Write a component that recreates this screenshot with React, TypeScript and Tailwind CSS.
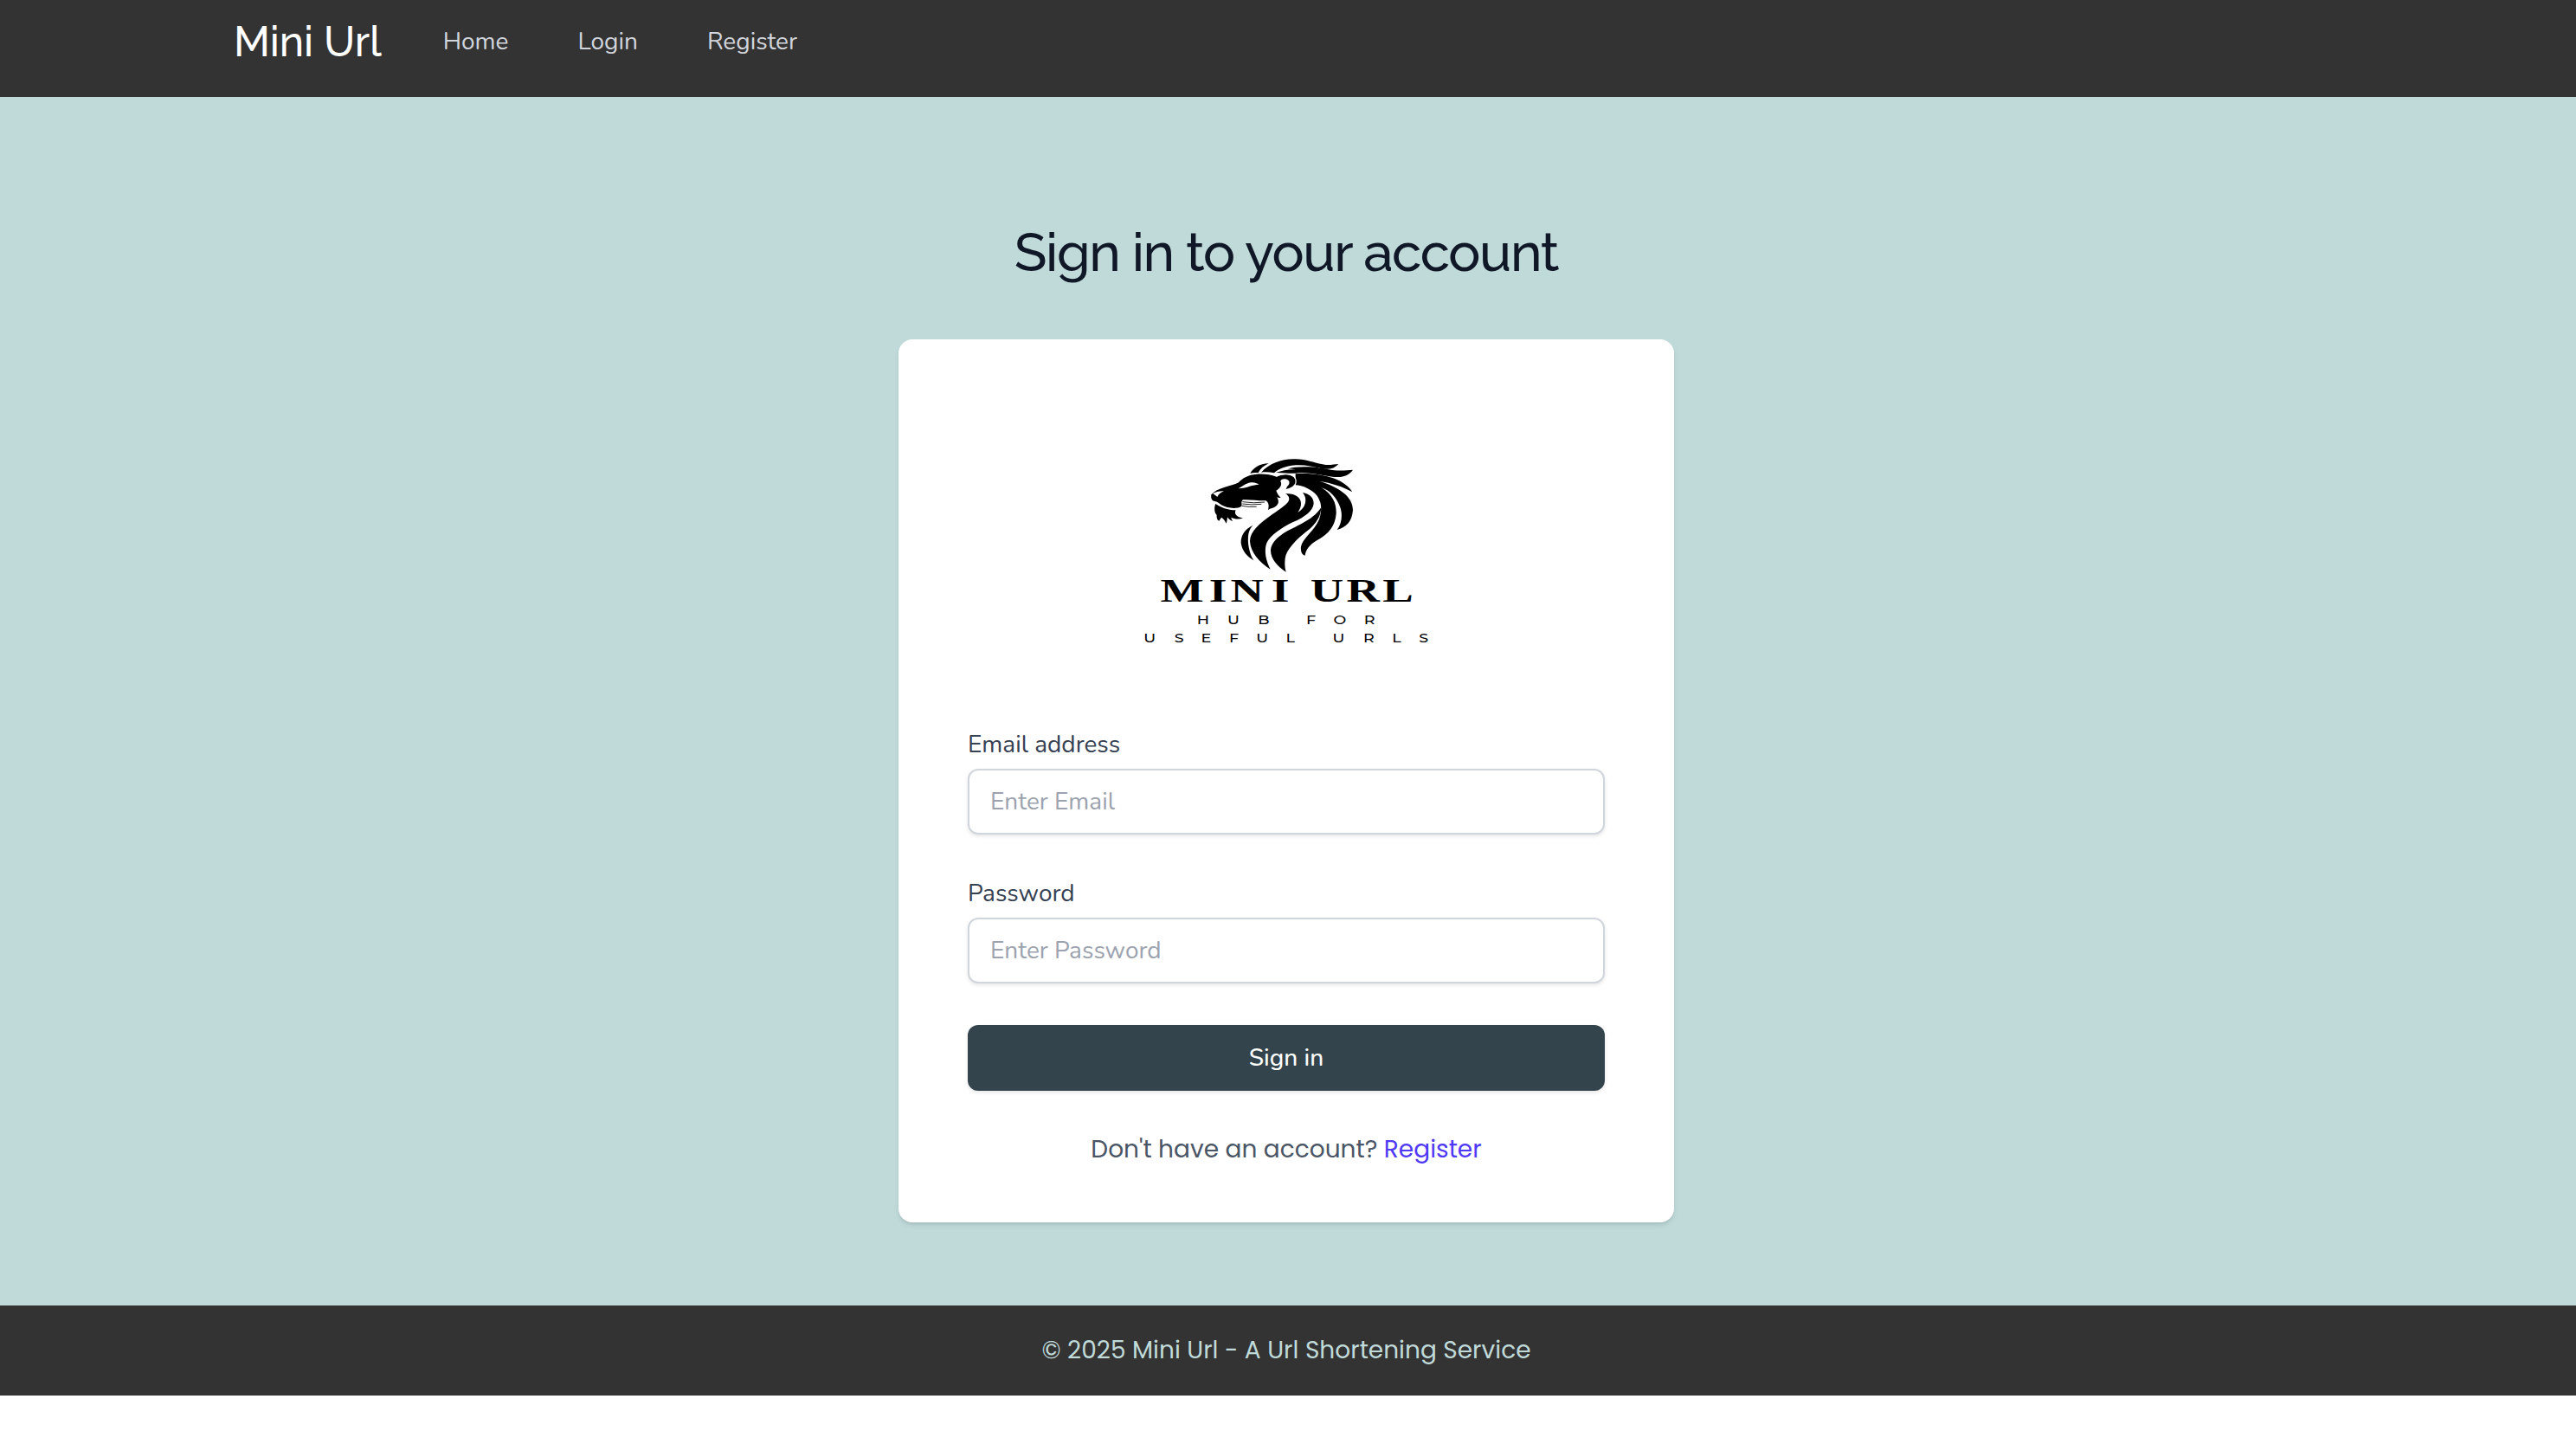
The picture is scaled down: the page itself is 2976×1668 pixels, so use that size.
const field =
  "block h-[76px] w-full rounded-xl border-2 border-gray-300 bg-white px-6 font-['Nunito','Noto_Sans',sans-serif] text-[28px] text-gray-900 shadow-[0_2px_4px_rgba(0,0,0,0.1)] outline-none placeholder:text-[#9ca3af]";
const label =
  "block h-[57px] pt-2 font-['Nunito','Noto_Sans',sans-serif] text-[28px] font-[450] text-gray-700";

function Lion() {
  return (
    <svg viewBox="0 0 600 480" className="h-[160px] w-[200px]" fill="#000">
      <path d="M193 111C203 92 226 76 257 76C240 84 228 94 221 108C212 108 202 109 193 111Z" />
      <path d="M231 107C260 75 305 59 350 61C398 63 425 78 455 81C475 82 486 78 499 78C487 92 470 97 450 95C418 89 385 79 350 82C312 86 292 95 276 109C262 106 246 105 231 107Z" />
      <path d="M282 108C305 100 325 96 350 97C340 94 330 94 322 95C355 84 415 86 460 96C500 104 528 99 549 98C536 118 512 125 485 123C445 120 400 104 350 110C328 112 305 107 282 108Z" />
      <path d="M350 112C400 108 450 116 485 128C512 138 538 158 547 175C515 157 475 144 431 137C500 158 549 190 549 238C546 277 526 298 494 306C510 285 514 255 505 228C492 193 470 170 440 160C480 185 492 215 491 250C488 295 460 325 425 342C398 358 386 375 383 395C372 393 367 380 369 364C375 335 415 310 432 270C443 235 440 210 425 188C405 165 375 152 350 151Z" />
      <path d="M439 228C438 255 425 280 400 302C350 340 318 375 314 405C312 425 313 438 317 452C285 430 263 405 264 375C267 350 285 335 305 320C350 292 410 275 439 228Z" />
      <path d="M315 181C345 178 367 192 369 212C370 226 364 236 358 246C385 230 394 200 375 177C400 181 414 197 413 215C410 240 385 260 340 280C300 300 262 325 250 352C240 380 248 415 263 443C225 418 194 385 192 345C193 310 225 285 270 252C298 232 326 215 328 200C328 190 322 185 315 181Z" />
      <path d="M203 290C175 302 160 325 161 352C165 380 183 400 205 412C190 388 182 350 187 320C190 305 196 297 203 290Z" />
      <path d="M58 184C68 172 84 164 105 158C125 152 142 148 153 142C165 127 188 115 215 113C243 111 262 115 284 122C305 112 330 112 344 124C357 140 347 160 317 165L321 156C332 148 332 134 316 130C304 129 296 134 299 140C304 150 296 162 283 170C287 181 292 188 299 195C293 196 289 194 285 192C294 205 292 217 282 224C276 230 262 231 255 237C259 222 257 211 247 205C220 206 190 200 168 202C158 210 168 218 163 224C150 234 115 233 93 220C84 214 79 208 70 207C60 206 56 197 58 184Z" />
      <path d="M284 121C309 109 336 110 347 123C357 138 350 154 339 160" fill="none" stroke="#fff" strokeWidth="3" />
      <path d="M193 112C228 107 260 110 285 119" fill="none" stroke="#fff" strokeWidth="2.5" />
      <path d="M63 180C73 175 88 171 102 172C91 176 83 183 79 192C73 186 68 183 63 180Z" fill="#fff" />
      <path d="M152 163C167 155 176 146 195 142C206 140 215 144 224 149C200 149 185 161 152 163Z" fill="#fff" />
      <path d="M166 205Q205 212 246 208M164 212Q200 217 240 213M163 219Q190 224 220 222" fill="none" stroke="#fff" strokeWidth="3.5" />
      <path d="M166 209Q205 215 243 210M166 216Q198 221 232 217M164 223Q190 228 215 226" fill="none" stroke="#000" strokeWidth="2.6" />
      <path d="M73 216C90 228 115 238 143 238C137 248 142 261 168 266C153 270 138 269 127 263C128 269 130 273 133 276C123 274 118 268 114 262C113 270 113 277 110 284C106 275 101 268 94 263C90 268 87 269 86 275C78 273 76 262 77 255C69 247 67 230 73 216Z" />
    </svg>
  );
}

function Logo() {
  return (
    <div className="h-[321px] w-[370px]">
      <div className="pl-[79px]">
        <Lion />
      </div>
      <svg viewBox="0 0 370 90" className="-mt-1 h-[90px] w-[370px] overflow-visible" fill="#000">
        <text
          transform="scale(1.4 1)"
          fontFamily="'Liberation Serif',serif"
          fontWeight="700"
          fontSize="38"
          y="29"
          x="28.2 68.4 86.1 119.8 139 152 181.8 211.6"
        >
          MINI URL
        </text>
        <g
          transform="scale(1.22 1)"
          fontFamily="Montserrat,'Noto Sans',sans-serif"
          fontSize="14.4"
          fontWeight="500"
        >
          <text y="55" x="67.1 96 124.7 150 170.6 196.4 225.3">HUB FOR</text>
          <text y="76" x="16.7 45.8 71 97.5 123.2 151.3 170 195.4 224.5 251.9 277.2">USEFUL URLS</text>
        </g>
      </svg>
    </div>
  );
}

export default function App() {
  return (
    <div className="min-h-[1668px] bg-white">
      <nav className="flex h-28 bg-[#333333] pl-[270px]">
        <div className="flex h-24 items-center">
          <h1 className="font-['Raleway','Lato',sans-serif] text-[48px] font-medium tracking-[-0.1px] text-white">
            Mini Url
          </h1>
          <div className="ml-[71px] flex gap-20 font-['Nunito','Noto_Sans',sans-serif] text-[28px] font-[450] text-gray-300">
            <a>Home</a>
            <a>Login</a>
            <a>Register</a>
          </div>
        </div>
      </nav>
      <main className="flex h-[1396px] flex-col items-center bg-[#c0dada] pt-[140px] pr-1">
        <h2 className="h-[140px] pt-2 font-['Raleway','Lato',sans-serif] text-[62px] leading-[64px] font-[530] tracking-[-1.4px] text-gray-900">
          Sign in to your account
        </h2>
        <section className="flex h-[1020px] w-[896px] flex-col items-center rounded-2xl bg-white px-20 pt-[118px] shadow-md">
          <Logo />
          <form className="w-full">
            <label className={label}>Email address</label>
            <input className={field} placeholder="Enter Email" />
            <label className={`${label} mt-[39px]`}>Password</label>
            <input className={field} placeholder="Enter Password" />
            <button
              type="button"
              className="mt-12 block h-[76px] w-full rounded-xl bg-[#34444d] font-['Nunito','Noto_Sans',sans-serif] text-[28px] font-medium text-white shadow-[0_2px_4px_rgba(0,0,0,0.1)]"
            >
              Sign in
            </button>
          </form>
          <p className="mt-[47px] font-['Poppins','Inter',sans-serif] text-[28px] text-gray-600">
            Don't have an account? <a className="text-indigo-600">Register</a>
          </p>
        </section>
      </main>
      <footer className="flex h-[104px] items-center justify-center bg-[#333333] pr-1 font-['Poppins','Inter',sans-serif] text-[28px] text-[#c0dada]">
        © 2025 Mini Url - A Url Shortening Service
      </footer>
    </div>
  );
}
